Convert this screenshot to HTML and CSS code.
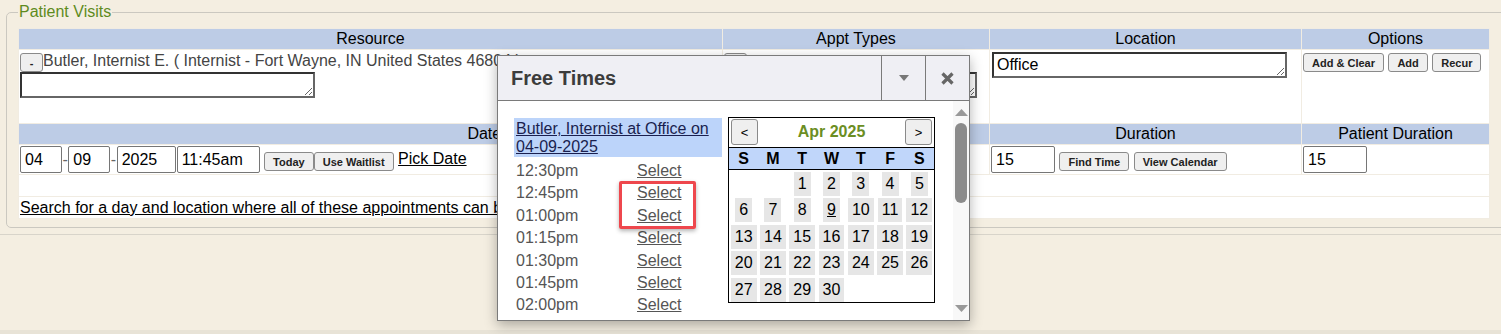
FILE: index.html
```html
<!DOCTYPE html>
<html>
<head>
    <meta charset="utf-8"/>
    <title>Patient Visits</title>
    <link rel="stylesheet" href="styles.css">
</head>
<body>
    <fieldset class="visits">
        <legend>Patient Visits</legend>
        <table class="visit-table">
            <tr class="head-row">
                <th class="col-resource">Resource</th>
                <th class="col-types">Appt Types</th>
                <th class="col-location">Location</th>
                <th class="col-options">Options</th>
            </tr>
            <tr class="pick-row">
                <td>
                    <button class="btn btn-remove">-</button><span class="pick-text">Butler, Internist E. ( Internist - Fort Wayne, IN United States 46804 )</span>
                    <textarea class="pick-box" rows="1"></textarea>
                </td>
                <td>
                    <button class="btn btn-remove">-</button>
                    <textarea class="pick-box types-box" rows="1"></textarea>
                </td>
                <td><textarea class="pick-box location-box" rows="1">Office</textarea></td>
                <td class="options-cell">
                    <button class="btn">Add &amp; Clear</button>
                    <button class="btn">Add</button>
                    <button class="btn">Recur</button>
                </td>
            </tr>
            <tr class="head-row">
                <th colspan="2">Date/Time</th>
                <th>Duration</th>
                <th>Patient Duration</th>
            </tr>
            <tr class="date-row">
                <td colspan="2">
                    <input class="field field-2" type="text" value="04"><span class="dash">-</span><input class="field field-2" type="text" value="09"><span class="dash">-</span><input class="field field-4" type="text" value="2025"><input class="field field-time" type="text" value="11:45am">
                    <button class="btn">Today</button><button class="btn">Use Waitlist</button>
                    <a class="plain-link" href="#">Pick Date</a>
                </td>
                <td>
                    <input class="field field-dur" type="text" value="15">
                    <button class="btn">Find Time</button>
                    <button class="btn">View Calendar</button>
                </td>
                <td><input class="field field-dur" type="text" value="15"></td>
            </tr>
            <tr class="blank-row"><td colspan="4"></td></tr>
            <tr class="search-row">
                <td colspan="4"><a class="plain-link" href="#">Search for a day and location where all of these appointments can be scheduled</a></td>
            </tr>
        </table>
    </fieldset>
    <div class="rule"></div>
    <div class="page-foot"></div>

    <!-- Free Times popup -->
    <div class="free-times">
        <div class="ft-header">
            <span class="ft-title">Free Times</span>
            <span class="ft-tool">
                <svg width="10" height="6" viewBox="0 0 10 6"><polygon points="0,0 10,0 5,6" fill="#777"/></svg>
            </span>
            <span class="ft-tool">
                <svg width="13" height="13" viewBox="0 0 13 13"><path d="M1.5 1.5 L11.5 11.5 M11.5 1.5 L1.5 11.5" stroke="#666" stroke-width="3.2"/></svg>
            </span>
        </div>
        <div class="ft-body">
            <div class="ft-content">
                <div class="ft-list">
                    <a class="ft-provider" href="#">Butler, Internist at Office on 04-09-2025</a>
                    <div class="ft-slots">
                        <span>12:30pm</span><a href="#">Select</a>
                        <span>12:45pm</span><a href="#">Select</a>
                        <span>01:00pm</span><a href="#">Select</a>
                        <span>01:15pm</span><a href="#">Select</a>
                        <span>01:30pm</span><a href="#">Select</a>
                        <span>01:45pm</span><a href="#">Select</a>
                        <span>02:00pm</span><a href="#">Select</a>
                    </div>
                </div>
                <div class="calendar">
                    <div class="cal-nav">
                        <button class="cal-btn">&lt;</button>
                        <span class="cal-month">Apr 2025</span>
                        <button class="cal-btn">&gt;</button>
                    </div>
                    <div class="cal-week">
                        <span>S</span><span>M</span><span>T</span><span>W</span><span>T</span><span>F</span><span>S</span>
                    </div>
                    <div class="cal-days">
                        <span></span><span></span>
                        <span class="day">1</span><span class="day">2</span><span class="day">3</span><span class="day">4</span><span class="day">5</span>
                        <span class="day">6</span><span class="day">7</span><span class="day">8</span><span class="day today">9</span><span class="day">10</span><span class="day">11</span><span class="day">12</span>
                        <span class="day">13</span><span class="day">14</span><span class="day">15</span><span class="day">16</span><span class="day">17</span><span class="day">18</span><span class="day">19</span>
                        <span class="day">20</span><span class="day">21</span><span class="day">22</span><span class="day">23</span><span class="day">24</span><span class="day">25</span><span class="day">26</span>
                        <span class="day">27</span><span class="day">28</span><span class="day">29</span><span class="day">30</span>
                    </div>
                </div>
            </div>
            <div class="ft-scroll">
                <svg width="13" height="7" viewBox="0 0 13 7"><polygon points="0,7 13,7 6.5,0" fill="#999"/></svg>
                <div class="ft-thumb"></div>
                <svg class="ft-down" width="13" height="7" viewBox="0 0 13 7"><polygon points="0,0 13,0 6.5,7" fill="#999"/></svg>
            </div>
        </div>
    </div>

    <!-- highlight around the chosen slots -->
    <div class="mark-box"></div>
</body>
</html>
```

FILE: styles.css
```css
html, body {
    height: 100%;
}
body {
    margin: 0;
    font-family: "Liberation Sans", Arial, sans-serif;
    font-size: 16px;
    color: #000;
    background-color: #f4eee1;
    overflow: hidden;
    display: flex;
    flex-direction: column;
}

/* Patient visits box */
.visits {
    align-self: flex-start;
    width: 1520px;
    margin: 3px 0 0 6px;
    padding: 7px 11px 8px 11px;
    border: 1px solid #cbc8c0;
    border-radius: 5px;
}
.visits legend {
    color: #5e8b1d;
    padding: 0 1px;
    line-height: 18px;
}
.rule {
    margin-top: 6px;
    border-top: 1px solid #d8d4ca;
    width: 100%;
}
.page-foot {
    margin-top: auto;
    height: 4px;
    background-color: #e8e3d7;
}

.visit-table {
    border-collapse: separate;
    border-spacing: 1px;
    table-layout: fixed;
    width: 1472px;
    background-color: #f1ece2;
}
.visit-table th {
    background-color: #bdcce6;
    font-weight: normal;
    height: 20px;
    line-height: 20px;
    padding: 0;
    text-align: center;
}
.col-resource { width: 703px; }
.col-types { width: 266px; }
.col-location { width: 311px; }
.col-options { width: 187px; }

.visit-table td {
    background-color: #fff;
    padding: 1px;
    vertical-align: top;
}
.pick-row td {
    height: 70px;
    padding-top: 2px;
}
.date-row td {
    height: 29px;
    vertical-align: middle;
    padding: 0 1px;
}
.blank-row td,
.search-row td {
    height: 21px;
    padding: 0 1px;
}
.search-row td {
    line-height: 21px;
}

.pick-text {
    color: #444;
}
.pick-box {
    display: block;
    box-sizing: border-box;
    width: 295px;
    height: 26px;
    margin: 0;
    padding: 1px 3px;
    border: 2px solid #333;
    border-right-color: #666;
    border-bottom-color: #666;
    font-family: "Liberation Sans", Arial, sans-serif;
    font-size: 16px;
    line-height: 20px;
    overflow: hidden;
}
.types-box {
    width: 253px;
}
.location-box {
    width: 295px;
    margin-left: 1px;
}
.options-cell {
    padding-left: 1px;
}

/* buttons */
.btn {
    font-family: "Liberation Sans", Arial, sans-serif;
    font-size: 11px;
    font-weight: bold;
    color: #222;
    height: 19px;
    margin: 0;
    padding: 0 8px;
    background-color: #efefef;
    border: 1px solid #8a8a8a;
    border-radius: 3px;
    vertical-align: middle;
}
.date-row .btn {
    position: relative;
    top: 2px;
}
.btn-remove {
    width: 23px;
    padding: 0;
    vertical-align: top;
    margin-top: 1px;
}
.options-cell .btn {
    margin-top: 1px;
    vertical-align: top;
}

.field {
    box-sizing: border-box;
    height: 27px;
    margin: 0;
    padding: 0 4px;
    border: 1px solid #767676;
    border-radius: 2px;
    font-family: "Liberation Sans", Arial, sans-serif;
    font-size: 16px;
    color: #000;
    vertical-align: middle;
}
.field-2 { width: 42px; }
.field-4 { width: 59px; }
.field-time {
    width: 83px;
    margin-left: 1px;
}
.field-dur { width: 64px; }
.dash {
    color: #666;
    padding: 0 0.5px;
    vertical-align: middle;
}
.plain-link {
    color: #000;
    text-decoration: underline;
}

/* Free Times popup */
.free-times {
    position: absolute;
    left: 497px;
    top: 55px;
    width: 471px;
    height: 264px;
    border: 1px solid #7a7a7a;
    background-color: #fff;
    box-shadow: 0 4px 12px rgba(0,0,0,0.3);
    display: flex;
    flex-direction: column;
}
.ft-header {
    display: flex;
    height: 44px;
    background-color: #efeff4;
    border-bottom: 1px solid #7a7a7a;
}
.ft-title {
    flex: 1;
    padding-left: 13px;
    font-size: 20px;
    font-weight: bold;
    color: #3c3c3c;
    line-height: 44px;
}
.ft-tool {
    width: 43px;
    border-left: 1px solid #7a7a7a;
    display: flex;
    align-items: center;
    justify-content: center;
}
.ft-body {
    flex: 1;
    display: flex;
    overflow: hidden;
}
.ft-content {
    flex: 1;
    display: flex;
    gap: 6px;
    padding: 16px 0 0 16px;
    overflow: hidden;
}
.ft-list {
    width: 208px;
}
.ft-provider {
    display: block;
    margin-top: 1px;
    padding: 2px 2px 1px 2px;
    line-height: 18px;
    background-color: #bcd4fa;
    color: #1a1f4f;
}
.ft-slots {
    display: grid;
    grid-template-columns: 121px auto;
    margin-top: 3px;
    padding-left: 2px;
    line-height: 22.4px;
    color: #555;
}
.ft-slots a {
    color: #555;
    justify-self: start;
}

.calendar {
    width: 205px;
    height: 184px;
    border: 1px solid #000;
    align-self: flex-start;
}
.cal-nav {
    display: flex;
    align-items: center;
    justify-content: space-between;
    padding: 1px 2px 2px 2px;
}
.cal-btn {
    width: 27px;
    height: 26px;
    margin: 0;
    padding: 0;
    font-family: "Liberation Sans", Arial, sans-serif;
    font-size: 13px;
    background-color: #efefef;
    border: 1px solid #8a8a8a;
    border-radius: 3px;
}
.cal-month {
    font-weight: bold;
    color: #6b8e23;
}
.cal-week {
    display: grid;
    grid-template-columns: repeat(7, 1fr);
    height: 21px;
    line-height: 21px;
    border-top: 1px solid #000;
    border-bottom: 1px solid #000;
    background-color: #c0d6fa;
    font-weight: bold;
    text-align: center;
}
.cal-days {
    display: grid;
    grid-template-columns: repeat(7, 1fr);
    grid-auto-rows: 24px;
    row-gap: 2.4px;
    justify-items: center;
    padding-top: 2px;
}
.day {
    padding: 0 4px;
    line-height: 24px;
    background-color: #e6e6e6;
}
.day.today {
    text-decoration: underline;
}

.ft-scroll {
    width: 16px;
    background-color: #f8f8f8;
    display: flex;
    flex-direction: column;
    align-items: center;
    padding-top: 8px;
}
.ft-thumb {
    width: 12px;
    height: 80px;
    margin-top: 7px;
    border-radius: 6px;
    background-color: #8b8b8b;
}
.ft-down {
    margin-top: auto;
    margin-bottom: 8px;
}

.mark-box {
    position: absolute;
    left: 619px;
    top: 181px;
    width: 71px;
    height: 42px;
    border: 3px solid #ee474d;
    border-radius: 2px;
    box-shadow: 0 2px 4px rgba(0,0,0,0.3);
}
```
